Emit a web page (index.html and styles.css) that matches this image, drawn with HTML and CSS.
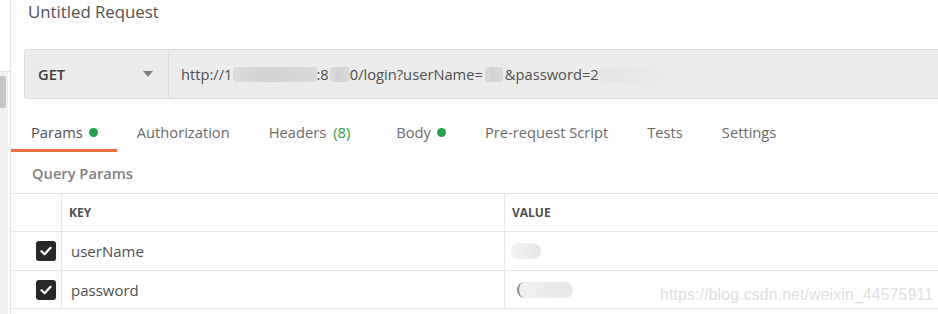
FILE: index.html
```html
<!DOCTYPE html>
<html lang="en">
<head>
  <meta charset="UTF-8" />
  <title>Untitled Request</title>
  <link rel="stylesheet" href="styles.css">
</head>
<body>

  <div class="sidebar">
    <div class="sidebar-top"></div>
    <div class="track"><div class="thumb"></div></div>
  </div>

  <div class="main">
    <h2 class="title">Untitled Request</h2>

    <div class="request-bar">
      <div class="method">
        <span>GET</span>
        <span class="caret"></span>
      </div>
      <div class="url">http://1<span class="blur b1"></span>:8<span class="blur b2"></span>0/login?userName=<span class="blur b3"></span>&amp;password=2<span class="blur b4"></span></div>
    </div>

    <div class="tabs">
      <div class="tab active">Params <span class="dot"></span></div>
      <div class="tab">Authorization</div>
      <div class="tab">Headers <span class="count">(8)</span></div>
      <div class="tab">Body <span class="dot"></span></div>
      <div class="tab">Pre-request Script</div>
      <div class="tab">Tests</div>
      <div class="tab">Settings</div>
    </div>

    <div class="section-label">Query Params</div>

    <div class="params">
      <div class="row head">
        <div class="cell check"></div>
        <div class="cell key">KEY</div>
        <div class="cell value">VALUE</div>
      </div>
      <div class="row">
        <div class="cell check"><span class="box">
          <svg width="12" height="10" viewBox="0 0 12 10"><path d="M1.5 5.2 4.6 8.2 10.5 1.8" fill="none" stroke="#fff" stroke-width="2.2" stroke-linecap="round" stroke-linejoin="round"/></svg>
        </span></div>
        <div class="cell key">userName</div>
        <div class="cell value"><span class="smudge s1"></span></div>
      </div>
      <div class="row">
        <div class="cell check"><span class="box">
          <svg width="12" height="10" viewBox="0 0 12 10"><path d="M1.5 5.2 4.6 8.2 10.5 1.8" fill="none" stroke="#fff" stroke-width="2.2" stroke-linecap="round" stroke-linejoin="round"/></svg>
        </span></div>
        <div class="cell key">password</div>
        <div class="cell value"><span class="smudge s2"></span></div>
      </div>
      <div class="row"></div>
    </div>

    <div class="watermark">https://blog.csdn.net/weixin_44575911</div>
  </div>

</body>
</html>
```

FILE: styles.css
```css
:root {
  --text: #505050;
  --muted: #808080;
  --line: #e6e6e6;
  --bar: #ececec;
  --green: #26a04b;
  --orange: #f26b3a;
}

body {
  margin: 0;
  display: flex;
  height: 314px;
  overflow: hidden;
  font-family: 'Open Sans', sans-serif;
  color: var(--text);
  background: #fff;
}

.sidebar {
  width: 10px;
  border-right: 1px solid var(--line);
  display: flex;
  flex-direction: column;
}

.sidebar-top {
  height: 71px;
  border-bottom: 1px solid #e2e2e2;
}

.track {
  flex: 1;
  width: 8px;
  background: #f0f0f0;
  padding-top: 4px;
}

.thumb {
  width: 6px;
  height: 32px;
  background: #c6c6c6;
  border-radius: 0 3px 3px 0;
}

.main {
  flex: 1;
  position: relative;
  overflow: hidden;
}

.title {
  margin: 0 0 0 17px;
  font-size: 16.8px;
  font-weight: 400;
  line-height: 23px;
  color: var(--text);
}

.request-bar {
  display: flex;
  margin: 26px -40px 0 13px;
  height: 48px;
  background: var(--bar);
  border: 1px solid #dcdcdc;
  border-radius: 3px;
  font-size: 14.7px;
}

.method {
  width: 144px;
  border-right: 1px solid #dadada;
  display: flex;
  align-items: center;
  justify-content: space-between;
  padding: 0 15px 0 13px;
  box-sizing: border-box;
  font-weight: 600;
  color: #404040;
}

.caret {
  width: 0;
  height: 0;
  border-left: 5px solid transparent;
  border-right: 5px solid transparent;
  border-top: 6px solid #808080;
}

.url {
  display: flex;
  align-items: center;
  padding-left: 12px;
  color: var(--text);
  white-space: pre;
}

.blur {
  display: inline-block;
  height: 15px;
  background: linear-gradient(90deg, #dcdcdc, #d2d2d2 40%, #dadada);
  border-radius: 3px;
}

.b1 { width: 84px; }
.b2 { width: 20px; margin-left: 1px; }
.b3 { width: 18px; margin: 0 2px; }
.b4 { width: 62px; background: linear-gradient(90deg, #e4e4e4, #ececec); border-radius: 8px; }

.tabs {
  display: flex;
  margin-top: 11px;
  font-size: 14.7px;
  line-height: 20px;
}

.tab {
  padding: 12px 19px 7px 20px;
  border-bottom: 3px solid transparent;
  color: #6b6b6b;
  display: flex;
  align-items: center;
  white-space: nowrap;
}

.tab.active {
  color: var(--text);
  border-bottom-color: var(--orange);
}

.dot {
  width: 9px;
  height: 9px;
  border-radius: 50%;
  background: var(--green);
  margin-left: 6px;
}

.count {
  color: var(--green);
  margin: 0 7px 0 7px;
}

.section-label {
  padding: 11px 0 10px 21px;
  font-size: 14.7px;
  font-weight: 600;
  line-height: 20px;
  color: var(--muted);
}

.params {
  border-top: 1px solid var(--line);
}

.row {
  display: flex;
  height: 37px;
  border-bottom: 1px solid var(--line);
}

.row:nth-child(2) {
  height: 38px;
}

.cell {
  display: flex;
  align-items: center;
  box-sizing: border-box;
}

.check {
  width: 51px;
  border-right: 1px solid var(--line);
  justify-content: flex-end;
  padding-right: 5px;
}

.key {
  width: 443px;
  border-right: 1px solid var(--line);
  padding-left: 9px;
  font-size: 15px;
  color: var(--text);
}

.value {
  flex: 1;
  padding-left: 6px;
}

.head .key,
.head .value {
  font-size: 12px;
  font-weight: 700;
  color: var(--text);
  padding-left: 7px;
}

.box {
  width: 20px;
  height: 20px;
  border-radius: 3px;
  background: #282828;
  display: flex;
  align-items: center;
  justify-content: center;
}

.smudge {
  display: inline-block;
  height: 16px;
  background: linear-gradient(90deg, #f2f2f2, #e6e6e6);
  border-radius: 8px;
}

.s1 { width: 30px; }
.s2 { width: 54px; margin-left: 6px; border-left: 2px solid #888; }

.watermark {
  position: absolute;
  left: 649px;
  top: 286px;
  font-family: 'Liberation Sans', Arial, sans-serif;
  font-size: 15.7px;
  color: #e0e0e0;
  letter-spacing: 0.2px;
}
```
